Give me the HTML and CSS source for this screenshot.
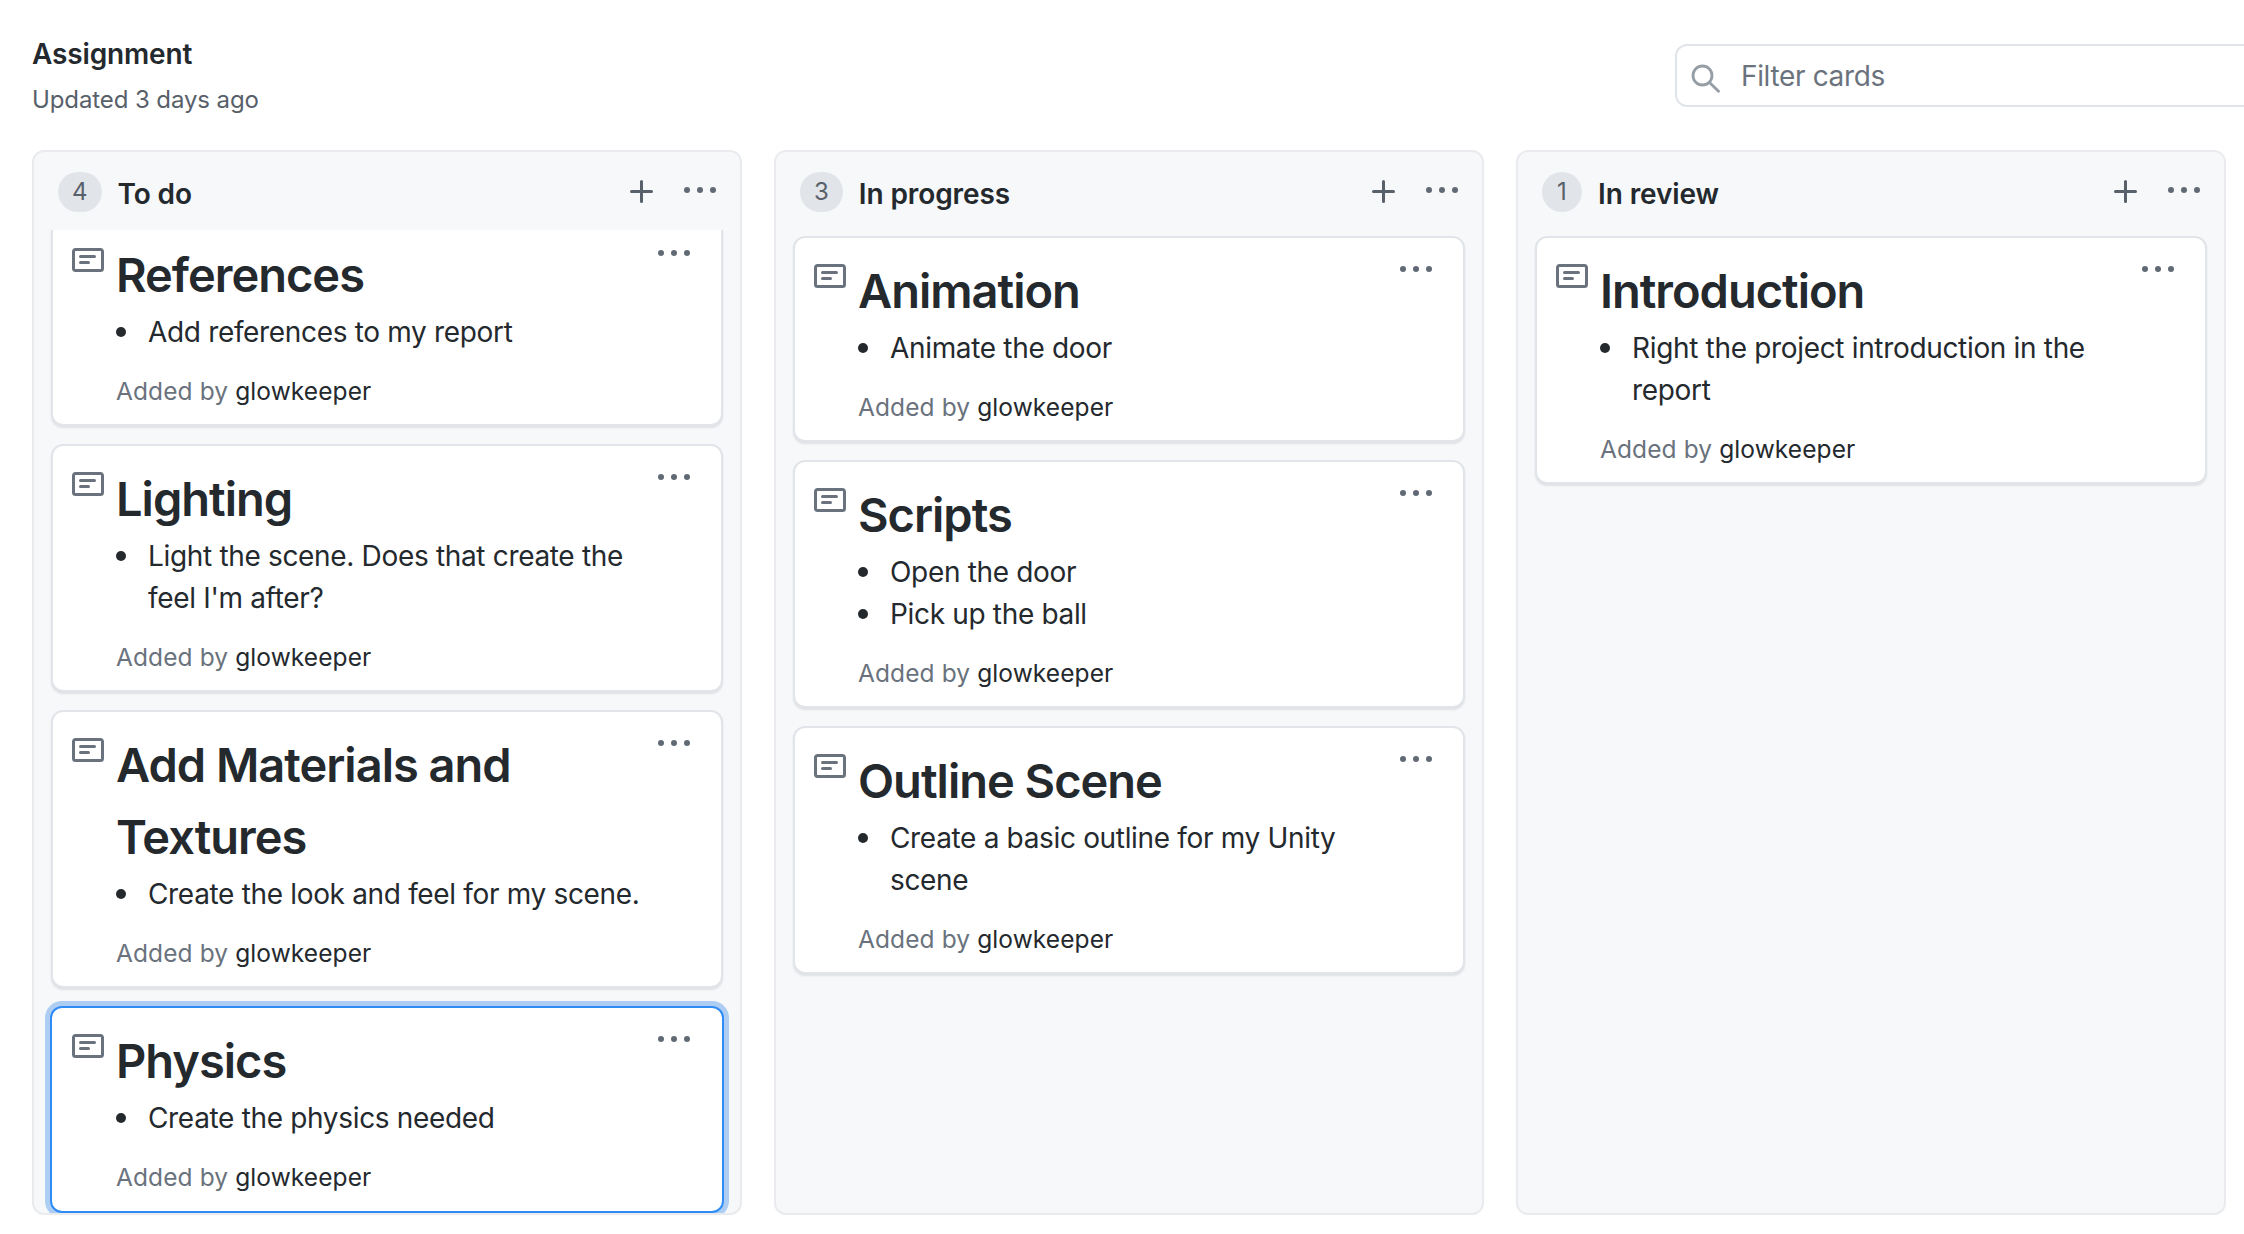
FILE: index.html
```html
<!DOCTYPE html>
<html lang="en">
<head>
<meta charset="utf-8">
<title>Assignment</title>
<link rel="stylesheet" href="styles.css">
</head>
<body>
<svg class="sprite" width="0" height="0" aria-hidden="true">
  <symbol id="note" viewBox="0 0 16 16"><path fill-rule="evenodd" d="M0 3.75C0 2.784.784 2 1.75 2h12.5c.966 0 1.75.784 1.75 1.75v8.5A1.75 1.75 0 0 1 14.25 14H1.75A1.75 1.75 0 0 1 0 12.25Zm1.75-.25a.25.25 0 0 0-.25.25v8.5c0 .138.112.25.25.25h12.5a.25.25 0 0 0 .25-.25v-8.5a.25.25 0 0 0-.25-.25ZM3.5 6.25a.75.75 0 0 1 .75-.75h7a.75.75 0 0 1 0 1.5h-7a.75.75 0 0 1-.75-.75Zm.75 2.25h4a.75.75 0 0 1 0 1.5h-4a.75.75 0 0 1 0-1.5Z"/></symbol>
  <symbol id="kebab" viewBox="0 0 16 16"><circle cx="1.5" cy="7.5" r="1.5"/><circle cx="8" cy="7.5" r="1.5"/><circle cx="14.5" cy="7.5" r="1.5"/></symbol>
  <symbol id="plus" viewBox="0 0 16 16"><path d="M7.75 2a.75.75 0 0 1 .75.75V7h4.25a.75.75 0 0 1 0 1.5H8.5v4.25a.75.75 0 0 1-1.5 0V8.5H2.75a.75.75 0 0 1 0-1.5H7V2.75A.75.75 0 0 1 7.75 2Z"/></symbol>
  <symbol id="search" viewBox="0 0 30 30"><circle cx="12.5" cy="12.5" r="9.5"/><path d="M19.5 19.5 28.5 28.2"/></symbol>
</svg>
<div class="page">
  <header class="top">
    <div class="top-text">
      <div class="project-name">Assignment</div>
      <div class="project-meta">Updated 3 days ago</div>
    </div>
    <div class="filter">
      <svg class="filter-icon"><use href="#search"/></svg>
      <span class="filter-text">Filter cards</span>
    </div>
  </header>
  <main class="board">

    <section class="column">
      <div class="col-head">
        <span class="counter">4</span>
        <span class="col-title">To do</span>
        <svg class="act-plus"><use href="#plus"/></svg>
        <svg class="act-kebab"><use href="#kebab"/></svg>
      </div>
      <div class="list list-scrolled">
        <article class="card">
          <svg class="note"><use href="#note"/></svg>
          <div class="body">
            <h1>References</h1>
            <ul><li>Add references to my report</li></ul>
            <p class="added">Added by <span class="user">glowkeeper</span></p>
          </div>
          <svg class="card-kebab"><use href="#kebab"/></svg>
        </article>
        <article class="card">
          <svg class="note"><use href="#note"/></svg>
          <div class="body">
            <h1>Lighting</h1>
            <ul><li>Light the scene. Does that create the feel I'm after?</li></ul>
            <p class="added">Added by <span class="user">glowkeeper</span></p>
          </div>
          <svg class="card-kebab"><use href="#kebab"/></svg>
        </article>
        <article class="card">
          <svg class="note"><use href="#note"/></svg>
          <div class="body">
            <h1>Add Materials and Textures</h1>
            <ul><li>Create the look and feel for my scene.</li></ul>
            <p class="added">Added by <span class="user">glowkeeper</span></p>
          </div>
          <svg class="card-kebab"><use href="#kebab"/></svg>
        </article>
        <article class="card card-selected">
          <svg class="note"><use href="#note"/></svg>
          <div class="body">
            <h1>Physics</h1>
            <ul><li>Create the physics needed</li></ul>
            <p class="added">Added by <span class="user">glowkeeper</span></p>
          </div>
          <svg class="card-kebab"><use href="#kebab"/></svg>
        </article>
      </div>
    </section>

    <section class="column">
      <div class="col-head">
        <span class="counter">3</span>
        <span class="col-title">In progress</span>
        <svg class="act-plus"><use href="#plus"/></svg>
        <svg class="act-kebab"><use href="#kebab"/></svg>
      </div>
      <div class="list">
        <article class="card">
          <svg class="note"><use href="#note"/></svg>
          <div class="body">
            <h1>Animation</h1>
            <ul><li>Animate the door</li></ul>
            <p class="added">Added by <span class="user">glowkeeper</span></p>
          </div>
          <svg class="card-kebab"><use href="#kebab"/></svg>
        </article>
        <article class="card">
          <svg class="note"><use href="#note"/></svg>
          <div class="body">
            <h1>Scripts</h1>
            <ul><li>Open the door</li><li>Pick up the ball</li></ul>
            <p class="added">Added by <span class="user">glowkeeper</span></p>
          </div>
          <svg class="card-kebab"><use href="#kebab"/></svg>
        </article>
        <article class="card">
          <svg class="note"><use href="#note"/></svg>
          <div class="body">
            <h1>Outline Scene</h1>
            <ul><li>Create a basic outline for my Unity scene</li></ul>
            <p class="added">Added by <span class="user">glowkeeper</span></p>
          </div>
          <svg class="card-kebab"><use href="#kebab"/></svg>
        </article>
      </div>
    </section>

    <section class="column">
      <div class="col-head">
        <span class="counter">1</span>
        <span class="col-title">In review</span>
        <svg class="act-plus"><use href="#plus"/></svg>
        <svg class="act-kebab"><use href="#kebab"/></svg>
      </div>
      <div class="list">
        <article class="card">
          <svg class="note"><use href="#note"/></svg>
          <div class="body">
            <h1>Introduction</h1>
            <ul><li>Right the project introduction in the report</li></ul>
            <p class="added">Added by <span class="user">glowkeeper</span></p>
          </div>
          <svg class="card-kebab"><use href="#kebab"/></svg>
        </article>
      </div>
    </section>

  </main>
</div>
</body>
</html>
```
FILE: styles.css
```css
* { box-sizing: border-box; }
html, body { margin: 0; height: 100%; }
body {
  background: #fff;
  color: #24292e;
  font-family: Inter, "Liberation Sans", sans-serif;
  font-size: 28px;
  line-height: 42px;
  overflow: hidden;
}
.sprite { display: block; }
.page { display: flex; flex-direction: column; height: 100vh; }

.top {
  flex: none;
  height: 150px;
  display: flex;
  align-items: flex-start;
  justify-content: space-between;
  padding-left: 32px;
}
.top-text { padding-top: 36px; }
.project-name { font-weight: 600; font-size: 28px; line-height: 36px; letter-spacing: -0.15px; }
.project-meta { margin-top: 10px; font-size: 24px; line-height: 36px; color: #586069; letter-spacing: -0.1px; }
.filter {
  flex: none;
  margin-top: 44px;
  margin-right: -260px;
  width: 829px;
  height: 63px;
  display: flex;
  align-items: center;
  gap: 21px;
  padding-left: 13px;
  border: 2px solid #e1e4e8;
  border-radius: 12px;
}
.filter-icon { width: 30px; height: 30px; fill: none; stroke: #959da5; stroke-width: 2.8; stroke-linecap: round; flex: none; margin-top: 5px; }
.filter-text { color: #6a737d; letter-spacing: -0.35px; }

.board {
  flex: 1;
  min-height: 0;
  display: flex;
  gap: 32px;
  padding: 0 18px 19px 32px;
}
.column {
  flex: 1 1 0;
  min-width: 0;
  display: flex;
  flex-direction: column;
  background: #f6f8fa;
  border: 2px solid #e9ebee;
  border-radius: 12px;
  overflow: hidden;
}
.col-head {
  flex: none;
  height: 78px;
  display: flex;
  align-items: center;
  padding: 2px 24px 0;
}
.counter {
  flex: none;
  height: 40px;
  min-width: 40px;
  padding: 0 14px;
  display: flex;
  align-items: center;
  justify-content: center;
  background: #e1e4e8;
  border-radius: 20px;
  font-size: 24px;
  color: #586069;
  line-height: 36px;
}
.col-title { flex: 1; margin-left: 16px; font-weight: 600; letter-spacing: -0.1px; padding-top: 3px; }
.act-plus { flex: none; width: 32px; height: 32px; fill: #586069; margin-right: 26px; }
.act-kebab { flex: none; width: 32px; height: 32px; fill: #616a74; margin-top: -2px; }

.list {
  flex: 1;
  min-height: 0;
  display: flex;
  flex-direction: column;
  gap: 18px;
  padding: 6px 17px 0;
  overflow: hidden;
}
.list-scrolled { justify-content: flex-end; padding-top: 0; padding-bottom: 0; }

.card {
  flex: none;
  display: flex;
  align-items: flex-start;
  padding: 17px 31px 15px 19px;
  background: #fff;
  border: 2px solid #e1e4e8;
  border-radius: 12px;
  box-shadow: 0 2px 2px rgba(27, 31, 35, 0.1);
}
.card-selected {
  margin: 0 -1px;
  padding: 17px 32px 16px 20px;
  border-color: #2f8cf7;
  box-shadow: 0 0 0 5px #aecdf2;
}
.note { flex: none; width: 32px; height: 32px; fill: #6a737d; margin-top: 5px; margin-right: 12px; }
.body { flex: 1; min-width: 0; }
.body h1 { margin: 0; font-size: 47px; line-height: 72px; font-weight: 600; letter-spacing: -1px; }
.body ul { margin: 0; padding: 0; list-style: none; }
.body li { display: flex; gap: 22px; letter-spacing: -0.33px; }
.body li::before {
  content: "";
  flex: none;
  width: 10px;
  height: 10px;
  margin-top: 16px;
  border-radius: 50%;
  background: #24292e;
}
.added { margin: 20px 0 0; font-size: 24.5px; line-height: 36px; color: #6a737d; letter-spacing: 0.1px; }
.user { color: #24292e; }
.card-kebab { flex: none; width: 32px; height: 32px; fill: #616a74; margin-top: -1px; }
```
